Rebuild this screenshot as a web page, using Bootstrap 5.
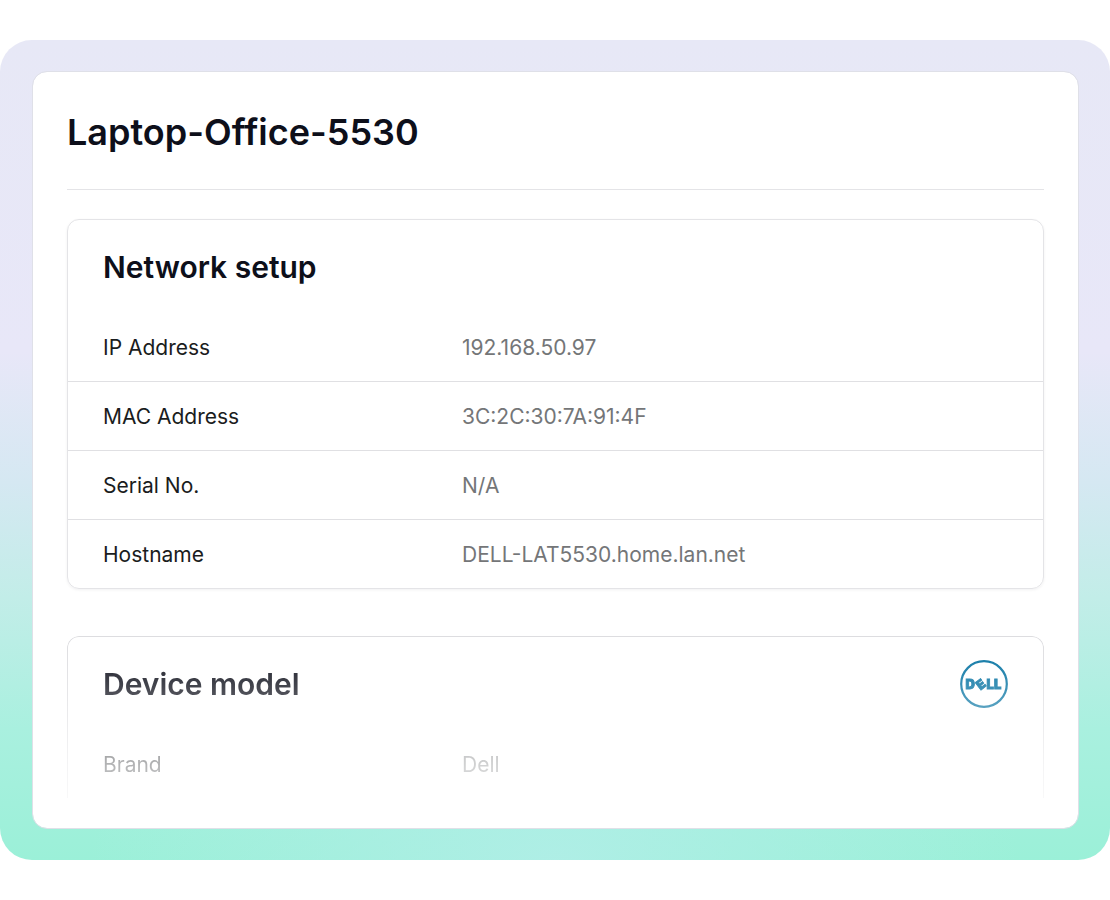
<!DOCTYPE html>
<html lang="en">
<head>
<meta charset="utf-8">
<meta name="viewport" content="width=device-width, initial-scale=1">
<title>Laptop-Office-5530</title>
<link href="https://cdn.jsdelivr.net/npm/bootstrap@5.3.0/dist/css/bootstrap.min.css" rel="stylesheet">
<style>
  body { font-family: Inter, "Liberation Sans", sans-serif; color: #0d0f1a; background: #fff; }
  .device-frame {
    margin: 40px 0;
    padding: 31px 31px 31px 32px;
    border-radius: 32px;
    background:
      radial-gradient(ellipse 42% 30% at 50% 100%, rgba(178, 238, 232, .85), rgba(178, 238, 232, 0)),
      linear-gradient(180deg, #e7e8f6 0%, #e8e7f8 38%, #d5e8f2 54%, #c2ede8 68%, #a9f0df 84%, #9bf0d8 100%);
  }
  .device-panel { padding: 35px 34px 30px; border-radius: 15px; border: 1px solid #dfe0e8; background-clip: padding-box; }
  .device-title { font-size: 36px; line-height: 50px; font-weight: 600; padding-bottom: 32px; border-bottom: 1px solid #e4e4e7; }
  .info-card { margin-top: 29px; border: 1px solid #e4e4e7; border-radius: 12px; box-shadow: 0 1px 3px rgba(20, 20, 40, .06); }
  .info-head { padding: 23px 35px 22px; }
  .info-head h2 { font-size: 30px; line-height: 48px; font-weight: 600; }
  .info-table { table-layout: fixed; font-size: 21px; line-height: 28px; }
  .info-table th, .info-table td { padding: 21px 0 19px; font-weight: 400; }
  .info-table th { width: 394px; padding-left: 35px; color: #1a1c20; }
  .info-table td { color: #747678; }
  .info-table tr + tr { border-top: 1px solid #e0e0e3; }
  .fade-down {
    margin-top: 47px; border-color: #dddde0; border-bottom: 0; border-radius: 12px 12px 0 0; box-shadow: none;
    -webkit-mask-image: linear-gradient(180deg, #000 0%, rgba(0, 0, 0, .8) 28%, rgba(0, 0, 0, .33) 80%, rgba(0, 0, 0, .2) 100%);
    mask-image: linear-gradient(180deg, #000 0%, rgba(0, 0, 0, .8) 28%, rgba(0, 0, 0, .33) 80%, rgba(0, 0, 0, .2) 100%);
  }
</style>
</head>
<body>
<main class="device-frame">
  <section class="device-panel bg-white">
    <h1 class="device-title mb-0">Laptop-Office-5530</h1>

    <article class="info-card">
      <header class="info-head"><h2 class="mb-0">Network setup</h2></header>
      <table class="info-table w-100 mb-0">
        <tbody>
          <tr><th scope="row">IP Address</th><td>192.168.50.97</td></tr>
          <tr><th scope="row">MAC Address</th><td>3C:2C:30:7A:91:4F</td></tr>
          <tr><th scope="row">Serial No.</th><td>N/A</td></tr>
          <tr><th scope="row">Hostname</th><td>DELL-LAT5530.home.lan.net</td></tr>
        </tbody>
      </table>
    </article>

    <article class="info-card fade-down">
      <header class="info-head d-flex justify-content-between align-items-start">
        <h2 class="mb-0">Device model</h2>
        <svg width="48" height="48" viewBox="0 0 48 48" role="img" aria-label="Dell">
          <circle cx="24" cy="24" r="22.8" fill="none" stroke="#0070a0" stroke-width="2.2"/>
          <text x="5.5 20.5 26.5 34" y="28.5 30.5 28.5 28.5" rotate="0 -38 0 0" font-family="Inter, sans-serif" font-size="13" font-weight="900" fill="#0070a0" stroke="#0070a0" stroke-width=".8">DELL</text>
        </svg>
      </header>
      <table class="info-table w-100 mb-0">
        <tbody>
          <tr><th scope="row">Brand</th><td>Dell</td></tr>
        </tbody>
      </table>
    </article>
  </section>
</main>
<script src="https://cdn.jsdelivr.net/npm/bootstrap@5.3.0/dist/js/bootstrap.bundle.min.js"></script>
</body>
</html>
